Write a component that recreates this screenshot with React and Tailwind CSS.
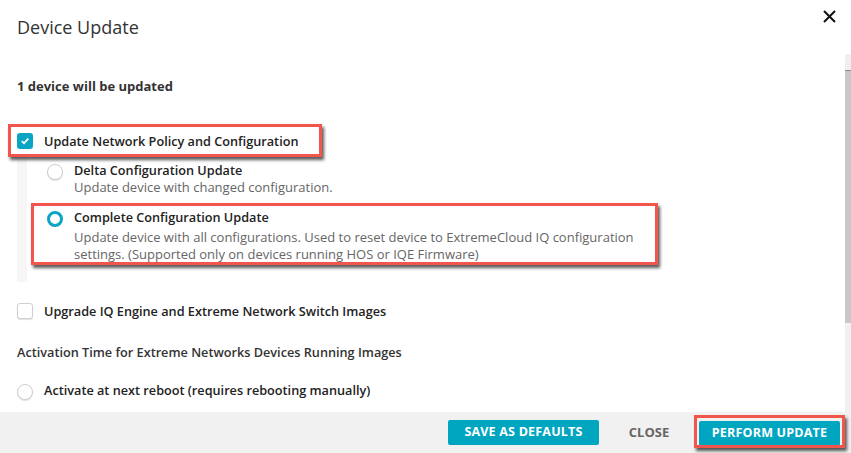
import React from "react";

const font = { fontFamily: '"Open Sans", "Liberation Sans", sans-serif' };

function RedBox({ className }) {
  return (
    <span
      className={
        "pointer-events-none absolute border-[3px] border-[#f2554b] shadow-[2px_3px_3px_rgba(0,0,0,0.65)] " +
        className
      }
    />
  );
}

function Radio({ checked }) {
  return checked ? (
    <span className="block h-[16px] w-[16px] shrink-0 rounded-full border-[3.5px] border-[#0aa5c2] bg-white" />
  ) : (
    <span className="block h-[16px] w-[16px] shrink-0 rounded-full border border-[#cfcfcf] bg-white shadow-[0_1px_1px_rgba(0,0,0,0.12)]" />
  );
}

export default function App() {
  return (
    <div
      className="relative flex h-[453px] w-[851px] flex-col overflow-hidden bg-white text-[#222]"
      style={font}
    >
      {/* header */}
      <div className="flex h-[54px] shrink-0 items-start justify-between">
        <div className="ml-[17px] mt-[15px] text-[18px] leading-[24px] font-medium text-[#333]">
          Device Update
        </div>
        <svg
          className="mr-[14px] mt-[9px]"
          width="15"
          height="15"
          viewBox="0 0 15 15"
        >
          <path d="M2 2 L13 13 M13 2 L2 13" stroke="#111" strokeWidth="2" />
        </svg>
      </div>

      {/* body */}
      <div className="flex min-h-0 flex-1">
        <div className="flex-1 pl-[17px]">
          <div className="mt-[24px] text-[13px] leading-[17px] font-bold text-[#333]">
            1 device will be updated
          </div>

          <div className="relative mt-[38px] flex h-[16px] items-center gap-[11px]">
            <RedBox className="-left-[9px] -top-[9px] h-[33px] w-[314px]" />
            <span className="flex h-[16px] w-[16px] items-center justify-center rounded-[3px] bg-[#0aa5c2]">
              <svg width="10" height="10" viewBox="0 0 10 10">
                <path
                  d="M1.8 5.2 L4 7.3 L8.3 2.6"
                  fill="none"
                  stroke="white"
                  strokeWidth="1.8"
                />
              </svg>
            </span>
            <span className="text-[12.7px] leading-[17px] font-semibold">
              Update Network Policy and Configuration
            </span>
          </div>

          <div className="mt-[8px] w-[400px] border-l-[10px] border-[#f6f6f6] pb-[19px] pl-[20px] pt-[5px]">
            <div className="flex items-start gap-[11px]">
              <span className="mt-[2px]">
                <Radio />
              </span>
              <div className="text-[13px] leading-[17px]">
                <div className="text-[12.7px] font-semibold">Delta Configuration Update</div>
                <div className="font-medium text-[#666]">
                  Update device with changed configuration.
                </div>
              </div>
            </div>
            <div className="relative mt-[13px] flex items-start gap-[11px]">
              <RedBox className="-left-[16px] -top-[6px] h-[62px] w-[627px]" />
              <span className="mt-[2px]">
                <Radio checked />
              </span>
              <div className="text-[13px] leading-[17px]">
                <div className="text-[12.7px] font-semibold">Complete Configuration Update</div>
                <div className="mt-[3px] whitespace-nowrap font-medium text-[#666]">
                  Update device with all configurations. Used to reset device to
                  ExtremeCloud IQ configuration
                  <br />
                  settings. (Supported only on devices running HOS or IQE
                  Firmware)
                </div>
              </div>
            </div>
          </div>

          <div className="mt-[21px] flex h-[16px] items-center gap-[11px]">
            <span className="block h-[16px] w-[16px] rounded-[3px] border border-[#cfcfcf] bg-white shadow-[0_1px_1px_rgba(0,0,0,0.12)]" />
            <span className="text-[12.7px] leading-[17px] font-semibold">
              Upgrade IQ Engine and Extreme Network Switch Images
            </span>
          </div>

          <div className="mt-[25px] text-[12.7px] leading-[17px] font-semibold text-[#333]">
            Activation Time for Extreme Networks Devices Running Images
          </div>

          <div className="mt-[21px] flex items-start gap-[11px]">
            <span className="mt-[2px]">
              <Radio />
            </span>
            <span className="text-[12.7px] leading-[17px] font-semibold">
              Activate at next reboot (requires rebooting manually)
            </span>
          </div>
        </div>

        {/* scrollbar */}
        <div className="flex w-[6px] shrink-0 flex-col bg-[#f1f1f1]">
          <div className="h-[17px] border-b border-[#8a8a8a] bg-[#efefef]" />
          <div className="h-[252px] bg-[#c8c8c8]" />
        </div>
      </div>

      {/* footer */}
      <div className="flex h-[41px] shrink-0 items-center justify-end bg-[#f1f1f1] pr-[11px]">
        <button className="h-[25px] w-[151px] rounded-[2px] bg-[#00a5c0] text-[12.5px] font-bold tracking-[0.2px] text-white">
          SAVE AS DEFAULTS
        </button>
        <button className="ml-[20px] h-[25px] w-[60px] text-[13px] font-bold text-[#666]">
          CLOSE
        </button>
        <div className="relative ml-[20px]">
          <RedBox className="-left-[5px] -top-[4px] h-[33px] w-[151px]" />
          <button className="h-[25px] w-[141px] rounded-[2px] bg-[#00a5c0] text-[12.5px] font-bold tracking-[0.2px] text-white">
            PERFORM UPDATE
          </button>
        </div>
      </div>
    </div>
  );
}
